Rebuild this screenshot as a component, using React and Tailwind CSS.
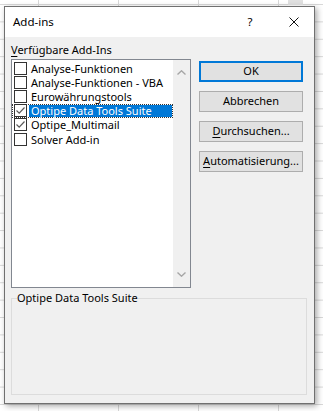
import React from 'react'

const items = [
  { label: 'Analyse-Funktionen', checked: false },
  { label: 'Analyse-Funktionen - VBA', checked: false },
  { label: 'Eurowährungstools', checked: false },
  { label: 'Optipe Data Tools Suite', checked: true, selected: true },
  { label: 'Optipe_Multimail', checked: true },
  { label: 'Solver Add-in', checked: false },
]

function CheckBox({ checked }) {
  return (
    <div className="w-[13px] h-[13px] border border-[#333333] bg-white flex items-center justify-center shrink-0">
      {checked && (
        <svg width="11" height="11" viewBox="0 0 11 11">
          <path d="M1.5 5.5 L4.2 8.2 L9.5 2.5" fill="none" stroke="#5a5a5a" strokeWidth="1.2" />
        </svg>
      )}
    </div>
  )
}

function Btn({ children, primary }) {
  return (
    <button
      className={`w-[104px] h-[21px] bg-[#e1e1e1] text-[11px] text-black flex items-center justify-center whitespace-nowrap ${
        primary ? 'border-2 border-[#0078d7]' : 'border border-[#adadad]'
      }`}
    >
      {children}
    </button>
  )
}

export default function App() {
  return (
    <div className="relative w-[323px] h-[411px] overflow-hidden bg-white bg-[linear-gradient(to_right,#d8d8d8_1px,transparent_1px),linear-gradient(to_bottom,#d8d8d8_1px,transparent_1px)] bg-[size:80px_17.4px] bg-[position:38px_4px] font-['Noto_Sans',sans-serif]">
      <div className="absolute left-[288px] top-0 w-[15px] h-[5px] bg-[#e0e0e0]" />

      {/* Dialog */}
      <div className="absolute left-[4px] top-[6px] w-[311px] h-[398px] border border-[#707070] flex flex-col shadow-[2px_2px_6px_rgba(0,0,0,0.35)]">
        {/* Title bar */}
        <div className="h-[30px] bg-white flex items-center pl-[8px] text-[11.5px] text-black">
          <span className="flex-1">Add-ins</span>
          <span className="w-[10px] text-center mr-[34px]">?</span>
          <svg width="10" height="10" viewBox="0 0 10 10" className="mr-[15px]">
            <path d="M0.5 0.5 L9.5 9.5 M9.5 0.5 L0.5 9.5" stroke="#111" strokeWidth="1" />
          </svg>
        </div>

        {/* Body */}
        <div className="flex-1 bg-[#f0f0f0] pl-[6px] pr-[7px] pt-[6px] flex flex-col text-[11px] text-black whitespace-nowrap">
          <div className="flex">
            <div className="flex flex-col">
              <div className="h-[14px] leading-[14px]">
                <span className="underline underline-offset-2">V</span>erfügbare Add-Ins
              </div>
              <div className="mt-[2px] w-[180px] h-[229px] border border-[#828790] bg-white flex">
                <div className="flex-1 pt-[1px] flex flex-col">
                  {items.map((it) => (
                    <div
                      key={it.label}
                      className={`h-[14.2px] flex items-center pl-[1px] ${
                        it.selected ? 'border border-dotted border-[#333]' : 'border border-transparent'
                      }`}
                    >
                      <CheckBox checked={it.checked} />
                      <div
                        className={`ml-[2px] flex-1 h-full flex items-center pl-[2px] leading-none ${
                          it.selected ? 'bg-[#0078d7] text-white' : ''
                        }`}
                      >
                        {it.label}
                      </div>
                    </div>
                  ))}
                </div>
                <div className="w-[17px] bg-[#f0f0f0] flex flex-col justify-between items-center py-[10px]">
                  <svg width="9" height="5" viewBox="0 0 9 5">
                    <path d="M0.5 4.5 L4.5 0.8 L8.5 4.5" fill="none" stroke="#a6a6a6" strokeWidth="1.4" />
                  </svg>
                  <svg width="9" height="5" viewBox="0 0 9 5">
                    <path d="M0.5 0.5 L4.5 4.2 L8.5 0.5" fill="none" stroke="#a6a6a6" strokeWidth="1.4" />
                  </svg>
                </div>
              </div>
            </div>

            <div className="ml-[8px] mt-[18px] flex flex-col gap-[9px]">
              <Btn primary>OK</Btn>
              <Btn>Abbrechen</Btn>
              <Btn>
                <span><span className="underline underline-offset-2">D</span>urchsuchen...</span>
              </Btn>
              <Btn>
                <span><span className="underline underline-offset-2">A</span>utomatisierung...</span>
              </Btn>
            </div>
          </div>

          {/* Group box */}
          <div className="relative mt-[10px] h-[97px] border border-[#dcdcdc]">
            <span className="absolute left-[5px] -top-[8px] bg-[#f0f0f0] leading-[14px]">Optipe Data Tools Suite</span>
          </div>
        </div>
      </div>
    </div>
  )
}
